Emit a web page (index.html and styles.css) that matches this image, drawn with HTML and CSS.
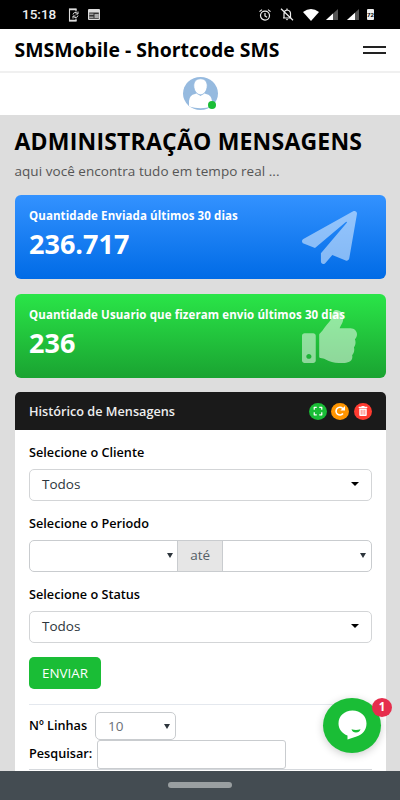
FILE: index.html
```
<!DOCTYPE html>
<html lang="pt-BR">
<head>
    <meta charset="UTF-8">
    <meta name="viewport" content="width=device-width, initial-scale=1.0">
    <title>SMSMobile - Shortcode SMS</title>
    <link rel="stylesheet" href="styles.css">
</head>
<body>
    <div class="status-bar">
        <span class="clock">15:18</span>
        <svg class="st-phone" width="12" height="14" viewBox="0 0 12 14" fill="none" stroke="#ddd">
            <path d="M8 3.500V1H1.500v12H8v-2.500" stroke-width="1.100"/>
            <path d="M1 1.500h7.500M1 12.500h7.500" stroke-width="1.600"/>
            <path d="M5 6.500a2.500 2.500 0 0 1 4.500-1M10 7.500a2.500 2.500 0 0 1-4.500 1M10 3.500v2.500H7.500M5 10.500V8h2.500" stroke-width="1"/>
        </svg>
        <svg class="st-news" width="12" height="11" viewBox="0 0 12 11">
            <rect width="12" height="11" rx="1" fill="#ddd"/>
            <path d="M1.200 3.500h9.600v6.300H1.200z" fill="#333"/>
            <path d="M1.200 4.500h4.300v1.500H1.200zM1.200 7.500h4.300v1.500H1.200z" fill="#999"/>
            <path d="M6.500 5h4.300v4H6.500z" fill="#aaa"/>
        </svg>
        <div class="status-right">
            <svg width="12" height="12" viewBox="0 0 12 12" fill="none" stroke="#eee" stroke-width="1.200">
                <circle cx="6" cy="6.600" r="4.500"/>
                <path d="M.5 2.600 3 .6M11.500 2.600 9 .6M6 4v3l2 1.200"/>
            </svg>
            <svg width="14" height="13" viewBox="0 0 14 13" fill="none" stroke="#eee" stroke-width="1.200">
                <path d="M3 10h8.500M4 9.500V5.500q0-3 3-3.500 3.500.5 3.500 3.500v4M7 .5V2M1 .8l12 11.500"/>
                <path d="M5.800 11h2.400L7 12.500z" fill="#eee" stroke="none"/>
            </svg>
            <svg width="16" height="12" viewBox="0 0 16 12"><path d="M0 3q8-6 16 0L8 12z" fill="#fff"/></svg>
            <svg class="st-signal" width="12" height="11" viewBox="0 0 12 11">
                <path d="M0 11 12 0v11z" fill="#555"/><path d="M0 11 7 4.600V11z" fill="#fff"/>
            </svg>
            <svg class="st-signal" width="12" height="11" viewBox="0 0 12 11">
                <path d="M0 11 12 0v11z" fill="#555"/><path d="M0 11 8 3.700V11z" fill="#fff"/>
            </svg>
            <div class="battery"><span>72</span></div>
        </div>
    </div>

    <header class="header">
        <div class="brand">SMSMobile - Shortcode SMS</div>
        <div class="menu-toggle"><span></span><span></span></div>
    </header>

    <div class="profile">
        <div class="avatar">
            <svg width="35" height="33" viewBox="0 0 35 33">
                <defs><clipPath id="round"><ellipse cx="17.500" cy="16.500" rx="17.500" ry="16.500"/></clipPath></defs>
                <g clip-path="url(#round)">
                    <rect width="35" height="33" fill="#96badf"/>
                    <path d="M6 29.500V24Q6.500 18 12 17L14 16.300 17.500 19 21 16.300 23 17Q28.500 18 29 24V29.500Q17.500 33 6 29.500z" fill="#fff"/>
                    <path d="M17.500 1.800c4.600 0 6.700 3 6.700 6.800 0 5-3 9.200-6.700 9.200s-6.700-4.200-6.700-9.200c0-3.800 2.100-6.800 6.700-6.800z" fill="#fff" stroke="#96badf" stroke-width=".8"/>
                </g>
            </svg>
            <span class="online"></span>
        </div>
    </div>

    <main class="content">
        <h1>ADMINISTRAÇÃO MENSAGENS</h1>
        <p class="subtitle">aqui você encontra tudo em tempo real ...</p>

        <div class="widget widget-blue">
            <div class="widget-title">Quantidade Enviada últimos 30 dias</div>
            <div class="widget-number">236.717</div>
            <svg class="widget-icon" viewBox="0 0 512 512" preserveAspectRatio="none"><path d="M476 3.200L12.500 270.600c-18.100 10.400-15.800 35.600 2.200 43.200L121 358.400l287.300-253.200c5.500-4.900 13.300 2.600 8.600 8.300L176 407v80.500c0 23.600 28.500 32.900 42.500 15.800L282 426l124.600 52.200c14.200 6 30.400-2.900 33-18.200l72-432C515 7.800 493.300-6.800 476 3.200z"/></svg>
        </div>

        <div class="widget widget-green">
            <div class="widget-title">Quantidade Usuario que fizeram envio últimos 30 dias</div>
            <div class="widget-number">236</div>
            <svg class="widget-icon" viewBox="0 0 512 512" preserveAspectRatio="none"><path d="M104 224H24c-13.255 0-24 10.745-24 24v240c0 13.255 10.745 24 24 24h80c13.255 0 24-10.745 24-24V248c0-13.255-10.745-24-24-24zM64 472c-13.255 0-24-10.745-24-24s10.745-24 24-24 24 10.745 24 24-10.745 24-24 24zM384 81.452c0 42.416-25.970 66.208-33.277 94.548h101.723c33.397 0 59.397 27.746 59.553 58.098.084 17.938-7.546 37.249-19.439 49.197l-.11.11c9.836 23.337 8.237 56.037-9.308 79.469 8.681 25.895-.069 57.704-16.382 74.757 4.298 17.598 2.244 32.575-6.148 44.632C440.202 511.587 389.616 512 346.839 512l-2.845-.001c-48.287-.017-87.806-17.598-119.560-31.725-15.957-7.099-36.821-15.887-52.651-16.178-6.540-.12-11.783-5.457-11.783-11.998v-213.770c0-3.200 1.282-6.271 3.558-8.521 39.614-39.144 56.648-80.587 89.117-113.111 14.804-14.832 20.188-37.236 25.393-58.902C282.515 39.293 291.817 0 312 0c24 0 72 8 72 81.452z"/></svg>
        </div>

        <div class="panel">
            <div class="panel-heading">
                <h4>Histórico de Mensagens</h4>
                <div class="panel-buttons">
                    <span class="btn-icon btn-expand"><svg width="10" height="10" viewBox="0 0 448 512"><path d="M0 180V56c0-13.300 10.700-24 24-24h124c6.600 0 12 5.400 12 12v40c0 6.600-5.400 12-12 12H64v84c0 6.600-5.400 12-12 12H12c-6.600 0-12-5.400-12-12zM288 44v40c0 6.600 5.400 12 12 12h84v84c0 6.600 5.400 12 12 12h40c6.600 0 12-5.400 12-12V56c0-13.300-10.700-24-24-24H300c-6.600 0-12 5.400-12 12zm148 276h-40c-6.600 0-12 5.400-12 12v84h-84c-6.600 0-12 5.400-12 12v40c0 6.600 5.400 12 12 12h124c13.300 0 24-10.700 24-24V332c0-6.600-5.400-12-12-12zM160 468v-40c0-6.600-5.400-12-12-12H64v-84c0-6.600-5.400-12-12-12H12c-6.600 0-12 5.400-12 12v124c0 13.300 10.700 24 24 24h124c6.600 0 12-5.400 12-12z"/></svg></span>
                    <span class="btn-icon btn-reload"><svg width="10" height="10" viewBox="0 0 10 10"><path d="M8 7.600A3.900 3.900 0 1 1 7.600 2.300L8.500 3.400" fill="none" stroke="#fff" stroke-width="1.600"/><path d="M10 0v4.600H5.400z"/></svg></span>
                    <span class="btn-icon btn-remove"><svg width="10" height="10" viewBox="0 0 448 512"><path d="M32 464a48 48 0 0 0 48 48h288a48 48 0 0 0 48-48V128H32zm272-256a16 16 0 0 1 32 0v224a16 16 0 0 1-32 0zm-96 0a16 16 0 0 1 32 0v224a16 16 0 0 1-32 0zm-96 0a16 16 0 0 1 32 0v224a16 16 0 0 1-32 0zM432 32H312l-9.400-18.700A24 24 0 0 0 281.100 0H166.800a23.720 23.720 0 0 0-21.400 13.300L136 32H16A16 16 0 0 0 0 48v32a16 16 0 0 0 16 16h416a16 16 0 0 0 16-16V48a16 16 0 0 0-16-16z"/></svg></span>
                </div>
            </div>
            <div class="panel-body">
                <div class="form-group">
                    <div class="label">Selecione o Cliente</div>
                    <div class="select-picker">Todos<span class="caret"></span></div>
                </div>
                <div class="form-group">
                    <div class="label">Selecione o Periodo</div>
                    <div class="input-group">
                        <div class="period"><span class="arrow"></span></div>
                        <div class="addon">até</div>
                        <div class="period"><span class="arrow"></span></div>
                    </div>
                </div>
                <div class="form-group">
                    <div class="label">Selecione o Status</div>
                    <div class="select-picker">Todos<span class="caret"></span></div>
                </div>
                <button class="btn-send">ENVIAR</button>
                <div class="table-tools">
                    <div class="tool-row">
                        <span class="label lines-label">Nº Linhas</span>
                        <div class="lines-select">10<span class="arrow"></span></div>
                    </div>
                    <div class="tool-row">
                        <span class="label search-label">Pesquisar:</span>
                        <div class="search-input"></div>
                    </div>
                    <div class="table-top"></div>
                </div>
            </div>
        </div>
    </main>

    <div class="chat">
        <svg width="29" height="30" viewBox="0 0 29 30">
            <path d="M14.500.5C22.500.5 28.500 6 28.500 13.500 28.500 20.500 24 25 18.500 26.500L9.500 29.500V25.500C4 23.500.5 19 .5 13.500.5 6 6.500.5 14.500.5z" fill="#fff"/>
            <path d="M13.500 19.200q4.500 1.500 9 0-1 3.300-4.500 3.300t-4.500-3.300z" fill="#1abd36"/>
        </svg>
        <span class="chat-badge">1</span>
    </div>

    <div class="nav-bar"><span class="nav-pill"></span></div>
</body>
</html>
```
FILE: styles.css
```
:root {
    --green: #1abd36;
    --dark: #1a1a1a;
    --page-bg: #dddddd;
    --border: #d3d5d7;
}

* {
    box-sizing: border-box;
}

body {
    margin: 0;
    height: 800px;
    position: relative;
    overflow: hidden;
    background: var(--page-bg);
    color: #000;
    font-family: 'Open Sans', sans-serif;
    font-size: 13px;
}

svg {
    display: block;
    flex: none;
}

/* status bar */
.status-bar {
    display: flex;
    align-items: center;
    height: 29px;
    padding: 0 26px 0 22px;
    background: #000;
    color: #eee;
}

.clock {
    width: 46px;
    font: 500 13.5px/29px Roboto, sans-serif;
}

.st-news {
    margin-left: 8px;
}

.status-right {
    display: flex;
    align-items: center;
    gap: 9px;
    margin-left: auto;
}

.st-signal {
    margin-left: -2px;
}

.st-signal + .st-signal {
    margin-left: 0;
}

.battery {
    width: 7px;
    height: 11px;
    margin-left: -1px;
    border-radius: 1px;
    background: #eee;
    color: #000;
    font: 700 6px/11px Roboto, sans-serif;
    text-align: center;
}

/* header */
.header {
    display: flex;
    align-items: center;
    justify-content: space-between;
    height: 44px;
    padding: 0 14px 0 14.5px;
    background: #fff;
    border-bottom: 2px solid #f0f0f0;
}

.brand {
    font-size: 19.4px;
    font-weight: 700;
    line-height: 26px;
    white-space: nowrap;
}

.menu-toggle {
    display: flex;
    flex-direction: column;
    gap: 4px;
    width: 23px;
}

.menu-toggle span {
    height: 2px;
    background: #222;
}

.profile {
    display: flex;
    justify-content: center;
    height: 42px;
    padding-top: 4px;
    background: #fff;
}

.avatar {
    position: relative;
    width: 35px;
    height: 33px;
}

.online {
    position: absolute;
    right: 2px;
    bottom: 1px;
    width: 8px;
    height: 8px;
    border-radius: 50%;
    background: var(--green);
}

/* content */
.content {
    padding: 10px 14px 0 14.5px;
}

h1 {
    margin: 0;
    font-size: 23px;
    font-weight: 700;
    line-height: 32px;
    letter-spacing: 0.2px;
    white-space: nowrap;
}

.subtitle {
    margin: 4px 0 13px;
    font-size: 13.5px;
    line-height: 21px;
    letter-spacing: 0.05px;
    color: #555;
}

.widget {
    position: relative;
    height: 84px;
    margin-bottom: 15px;
    padding: 12px 14.5px;
    border-radius: 6px;
    color: #fff;
}

.widget-blue {
    background: linear-gradient(#3392ff, #006be6);
}

.widget-green {
    margin-bottom: 14px;
    background: linear-gradient(#2ae548, #1aa331);
}

.widget-title {
    position: relative;
    z-index: 1;
    font-size: 11.5px;
    font-weight: 700;
    line-height: 18px;
    letter-spacing: 0.1px;
    white-space: nowrap;
}

.widget-number {
    font-size: 27px;
    font-weight: 700;
    line-height: 38px;
}

.widget-icon {
    position: absolute;
    top: 16px;
    right: 29px;
    width: 55px;
    height: 53px;
    fill: rgba(255, 255, 255, 0.5);
}

/* panel */
.panel {
    background: #fff;
    border-radius: 5px 5px 0 0;
}

.panel-heading {
    display: flex;
    align-items: center;
    justify-content: space-between;
    height: 38px;
    padding: 0 14.5px;
    border-radius: 5px 5px 0 0;
    background: var(--dark);
    color: #eee;
}

.panel-heading h4 {
    margin: 0;
    font-size: 12.7px;
    font-weight: 600;
}

.panel-buttons {
    display: flex;
    gap: 4.5px;
}

.btn-icon {
    display: flex;
    align-items: center;
    justify-content: center;
    width: 18px;
    height: 17px;
    border-radius: 50%;
    fill: #fff;
}

.btn-expand {
    background: var(--green);
}

.btn-reload {
    background: #ff9500;
}

.btn-remove {
    background: #ff3b30;
}

.panel-body {
    height: 345px;
    padding: 13px 14.5px 0;
}

.form-group {
    margin-bottom: 13px;
}

.label {
    font-size: 12.7px;
    font-weight: 600;
    line-height: 18px;
    white-space: nowrap;
}

.select-picker {
    display: flex;
    align-items: center;
    justify-content: space-between;
    height: 32px;
    margin-top: 8px;
    padding: 0 12px 2px;
    border: 1px solid var(--border);
    border-radius: 5px;
    color: #2d353c;
    font-size: 13.5px;
}

.caret {
    border: 4px solid transparent;
    border-top-color: #000;
    border-bottom: 0;
}

.arrow {
    border: 3px solid transparent;
    border-top: 5px solid #2d353c;
    border-bottom: 0;
}

.input-group {
    display: flex;
    height: 32px;
    margin-top: 8px;
    border: 1px solid #c9cccf;
    border-radius: 5px;
    overflow: hidden;
}

.period {
    display: flex;
    flex: 1;
    align-items: center;
    justify-content: flex-end;
    padding: 0 4.5px 1px 0;
}

.addon {
    width: 46px;
    border: 1px solid #c9cccf;
    border-width: 0 1px;
    background: #e6e6e6;
    color: #555e66;
    font-size: 13.5px;
    line-height: 29px;
    text-align: center;
}

.btn-send {
    display: block;
    width: 72px;
    height: 32px;
    margin-top: 14px;
    padding: 0;
    border: 0;
    border-radius: 5px;
    background: var(--green);
    color: #fff;
    font-family: inherit;
    font-size: 13.4px;
}

.table-tools {
    margin-top: 15px;
    padding-top: 7px;
    border-top: 1px solid #e4e8ee;
}

.tool-row {
    display: flex;
    align-items: center;
    height: 28px;
}

.tool-row .label {
    padding-bottom: 2px;
}

.lines-label {
    width: 66px;
}

.lines-select {
    display: flex;
    align-items: center;
    justify-content: space-between;
    width: 81px;
    height: 28px;
    padding: 0 5px 0 12px;
    border: 1px solid #c9cccf;
    border-radius: 5px;
    color: #6a7077;
    font-size: 13.5px;
}

.search-label {
    width: 68px;
}

.search-input {
    width: 189px;
    height: 29px;
    border: 1px solid #c9cccf;
    border-radius: 3px;
}

.table-top {
    height: 2px;
    margin-top: 1px;
    border-top: 1px solid #d5d8dc;
}

/* chat button */
.chat {
    position: absolute;
    left: 323px;
    top: 698px;
    display: flex;
    align-items: center;
    justify-content: center;
    width: 58px;
    height: 55px;
    padding-bottom: 2px;
    border-radius: 50%;
    background: var(--green);
    box-shadow: 0 2px 8px rgba(0, 0, 0, 0.2);
}

.chat-badge {
    position: absolute;
    top: 0;
    right: -11px;
    width: 20px;
    height: 19px;
    border-radius: 50%;
    background: #e62e4d;
    color: #fff;
    font-size: 11.5px;
    font-weight: 700;
    line-height: 18px;
    text-align: center;
}

.nav-bar {
    position: absolute;
    left: 0;
    right: 0;
    bottom: 0;
    display: flex;
    justify-content: center;
    height: 29px;
    padding-top: 11px;
    background: #444c52;
}

.nav-pill {
    width: 64px;
    height: 6px;
    border-radius: 3px;
    background: #9a9fa1;
}
```
